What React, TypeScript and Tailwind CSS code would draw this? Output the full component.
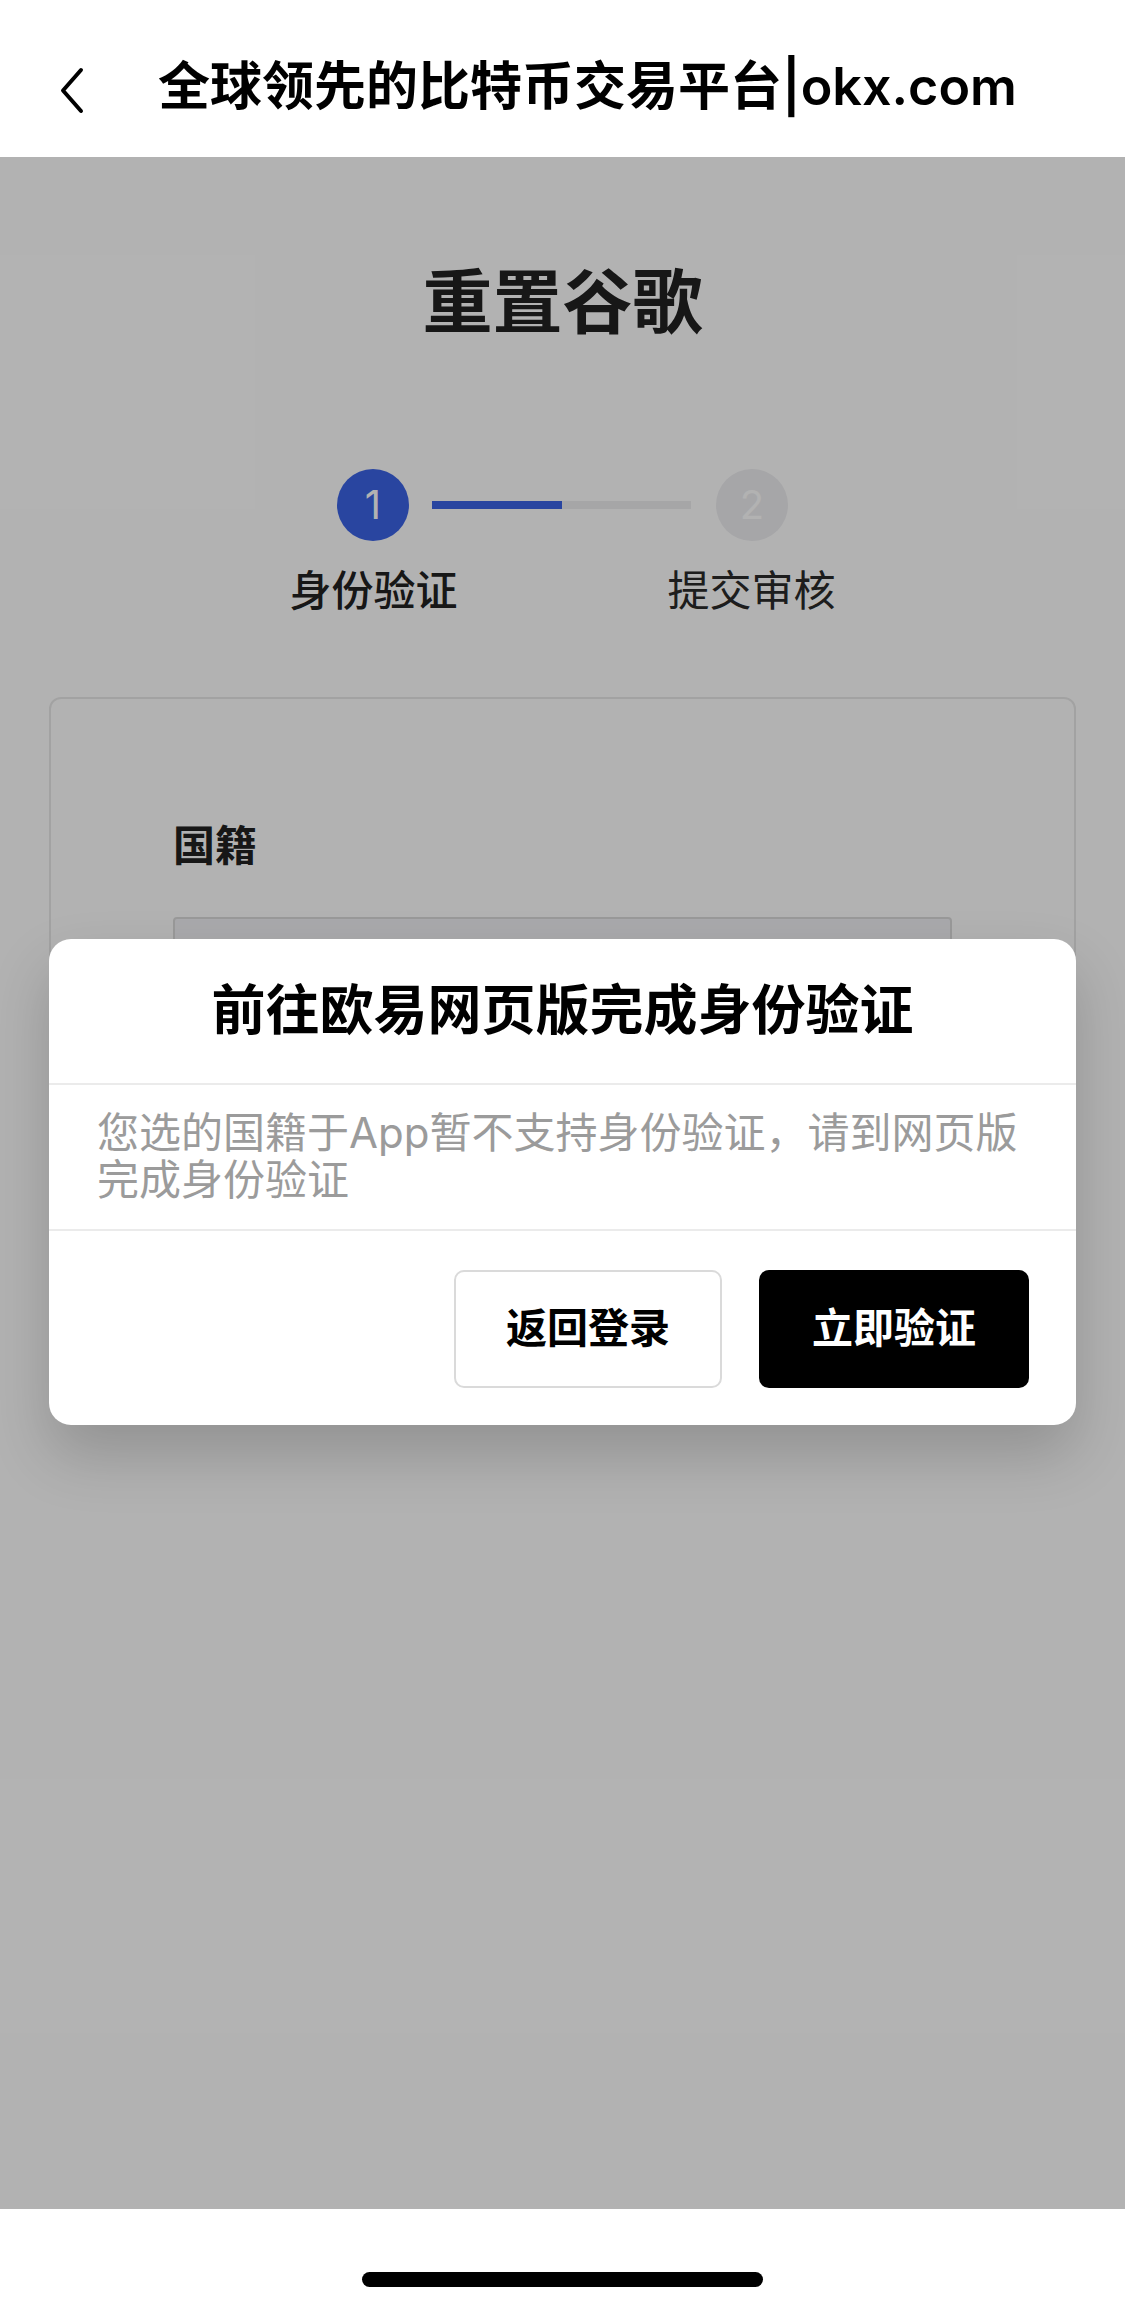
export default function App() {
  return (
    <div className="w-[1125px] h-[2311px] flex flex-col bg-white font-['Inter','Noto_Sans_CJK_SC',sans-serif] text-[#222]">
      {/* Nav bar */}
      <header className="h-[157px] shrink-0 bg-white flex items-center pt-[17px]">
        <svg className="ml-[58px] w-[30px] h-[56px]" viewBox="0 0 30 56" fill="none">
          <polyline points="23,11 5,31.5 23,52" stroke="#000" strokeWidth="4" strokeLinecap="round" strokeLinejoin="round" />
        </svg>
        <h1 className="ml-[70px] text-[52px] leading-[64px] font-semibold text-black whitespace-nowrap">
          全球领先的比特币交易平台|okx.com
        </h1>
      </header>

      {/* Web content with dialog on top */}
      <main className="relative flex-1 bg-white overflow-hidden">
        <div className="flex flex-col items-center">
          <h2 className="pt-[104px] text-[70px] leading-[84px] font-bold text-[#222]">重置谷歌</h2>

          {/* Stepper */}
          <div className="mt-[124px] flex items-center">
            <div className="w-[72px] h-[72px] rounded-full bg-[#3b63e6] flex items-center justify-center text-white text-[40px]">
              1
            </div>
            <div className="ml-[23px] w-[259px] h-[8px] flex bg-[#eeeef0]">
              <div className="w-[130px] h-full bg-[#3b63e6]" />
            </div>
            <div className="ml-[25px] w-[72px] h-[72px] rounded-full bg-[#eeeef1] flex items-center justify-center text-white text-[40px]">
              2
            </div>
          </div>
          <div className="mt-[25px] flex gap-[178px]">
            <span className="w-[200px] text-center text-[42px] leading-[50px] font-medium text-[#222]">身份验证</span>
            <span className="w-[200px] text-center text-[42px] leading-[50px] text-[#2a2a2a]">提交审核</span>
          </div>

          {/* Form card */}
          <div className="mt-[81px] self-stretch mx-[49px] border-2 border-[#e9e9e9] rounded-[12px] px-[122px] pt-[122px] pb-[120px]">
            <div className="text-[42px] leading-[50px] font-bold text-[#222]">国籍</div>
            <div className="mt-[46px] h-[120px] border-2 border-[#dcdcdc] bg-[#f3f3f7] rounded-[4px]" />
          </div>
        </div>

        {/* Overlay */}
        <div className="absolute inset-0 bg-black/30" />

        {/* Dialog */}
        <div className="absolute left-[49px] right-[49px] top-[782px] bg-white rounded-[22px] shadow-[0_30px_60px_rgba(0,0,0,0.18)] flex flex-col">
          <div className="h-[146px] flex items-center justify-center border-b-2 border-[#ebebeb]">
            <span className="text-[54px] leading-[64px] font-bold text-black">前往欧易网页版完成身份验证</span>
          </div>
          <p className="pl-[48px] pr-[44px] pt-[24px] pb-[26px] text-[42px] leading-[47px] text-[#9b9b9b] border-b-2 border-[#ebebeb]">
            您选的国籍于App暂不支持身份验证，请到网页版完成身份验证
          </p>
          <div className="flex justify-end gap-[37px] pr-[47px] pt-[39px] pb-[37px]">
            <button className="w-[268px] h-[118px] rounded-[10px] border-2 border-[#dadada] bg-white text-black text-[41px] font-semibold">
              返回登录
            </button>
            <button className="w-[270px] h-[118px] rounded-[10px] bg-black text-white text-[41px] font-semibold">
              立即验证
            </button>
          </div>
        </div>
      </main>

      {/* Home indicator */}
      <footer className="h-[102px] shrink-0 bg-white flex justify-center">
        <div className="mt-[63px] w-[401px] h-[15px] rounded-full bg-black" />
      </footer>
    </div>
  )
}
